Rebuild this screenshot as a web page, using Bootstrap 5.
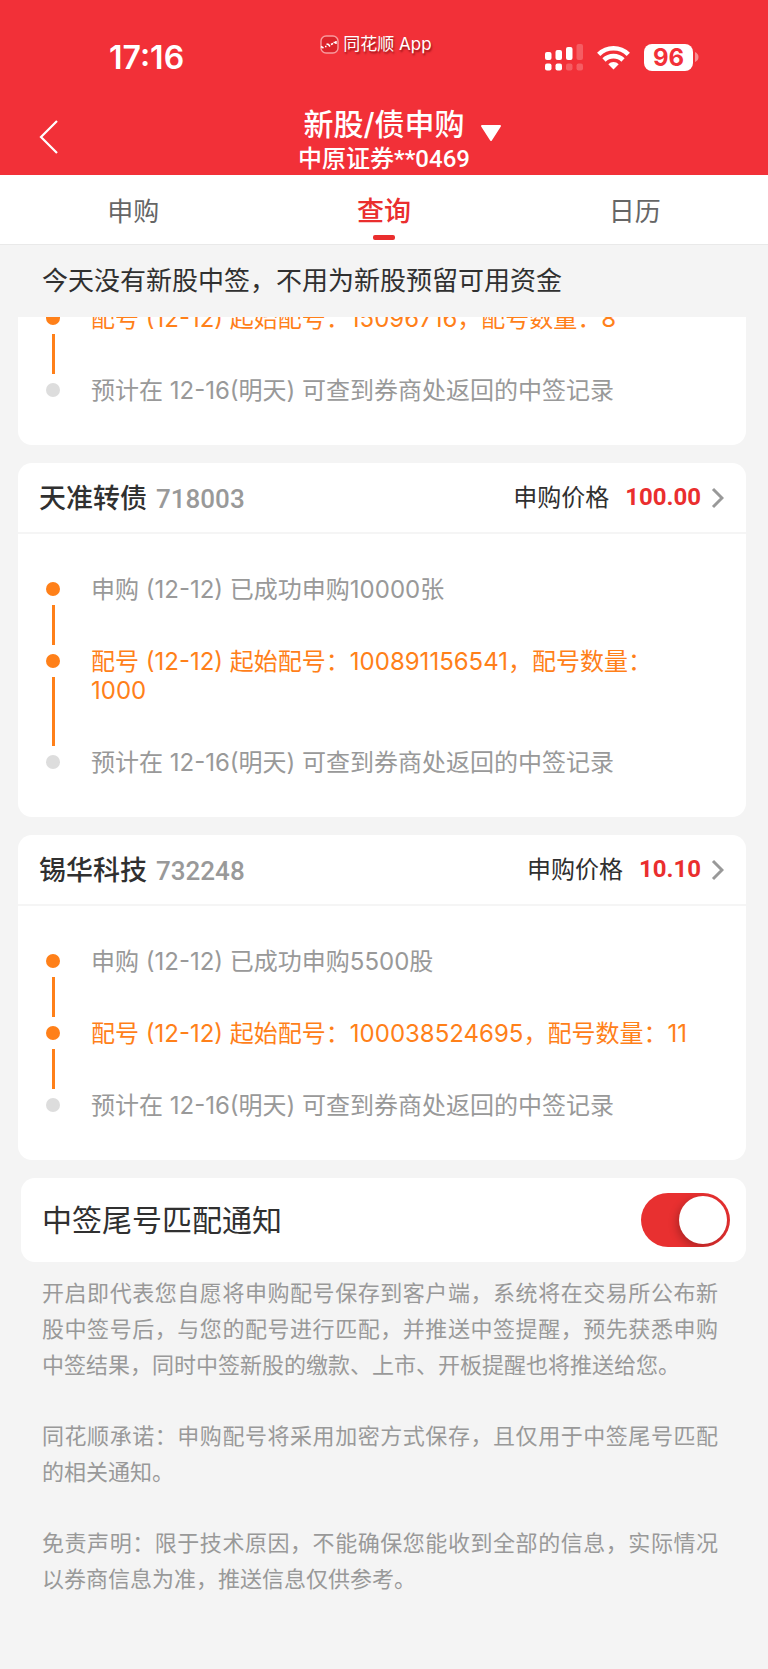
<!DOCTYPE html>
<html lang="zh-CN">
<head>
<meta charset="utf-8">
<meta name="viewport" content="width=device-width, initial-scale=1">
<title>新股/债申购</title>
<link rel="stylesheet" href="https://cdn.jsdelivr.net/npm/bootstrap@5.3.0/dist/css/bootstrap.min.css">
<style>
  body { background: #f4f4f4; color: #303030; font-family: Inter, "Noto Sans CJK SC", sans-serif; font-size: 24px; line-height: 29px; }
  .app-head { background: #f23038; color: #fff; height: 175px; }
  .three-col { display: grid; grid-template-columns: 1fr auto 1fr; }
  .status-bar { height: 98px; padding: 16px 16px 0 0; }
  .clock { font-size: 32px; font-weight: 600; padding-left: 109px; }
  .source-app { font-size: 17px; line-height: 20px; gap: 4px; padding-bottom: 26px; text-shadow: 1px 2px 2px rgba(90, 0, 0, .6); }
  .signals { gap: 14px; padding-right: 53px; }
  .battery-level { background: #fff; color: #f23038; width: 49px; height: 27px; border-radius: 8px; font-size: 24px; font-weight: 700; line-height: 27px; }
  .nav-row { height: 77px; }
  .page-title { font-size: 30px; line-height: 36px; font-weight: 500; margin: 0; }
  .account { font-family: Roboto, "Noto Sans CJK SC", sans-serif; line-height: 34px; font-weight: 500; }
  .plain-btn { background: none; border: 0; padding: 0; color: inherit; display: flex; }
  .back-btn { margin-left: 38px; }
  .drop-btn { margin: 19px 0 0 10px; }
  .tab-strip { background: #fff; height: 70px; padding: 0 8px; border-bottom: 1px solid #e9e9e9; }
  .tab-strip a { flex: 1; color: #666; font-size: 26px; line-height: 30px; text-decoration: none; padding-top: 22px; }
  .tab-strip a.active { color: #ea2e2e; font-size: 27px; font-weight: 500; }
  .tab-strip a.active::after { content: ""; width: 22px; height: 5px; margin-top: 8px; border-radius: 2px; background: #ea2e2e; }
  .notice { font-size: 26px; line-height: 30px; padding: 21px 42px; margin: 0; }
  .feed { padding: 0 22px 0 18px; gap: 18px; }
  .panel { background: #fff; border-radius: 14px; overflow: hidden; }
  .panel-cut { border-radius: 0 0 14px 14px; }
  .panel-cut .steps { padding-top: 0; margin-top: -13px; }
  .panel-head { height: 71px; padding: 0 22px 0 21px; border-bottom: 2px solid #f5f5f5; color: inherit; text-decoration: none; }
  .stock-name { font-size: 27px; font-weight: 500; margin: 0 9px 0 0; }
  .digits { font-family: Roboto, sans-serif; font-size: 26px; font-weight: 500; color: #999; }
  .price { font-size: 24px; font-weight: 700; color: #ea2e2e; margin: 0 10px 0 16px; }
  .steps { list-style: none; margin: 0; padding: 41px 46px 40px 28px; }
  .steps li { display: flex; gap: 31px; color: #999; }
  .steps li:not(:last-child) { padding-bottom: 43px; }
  .rail { flex: none; width: 14px; padding-top: 7px; display: flex; flex-direction: column; align-items: center; }
  .rail::before { content: ""; width: 14px; height: 14px; border-radius: 50%; background: #ff8019; }
  .steps li:last-child .rail::before { background: #ddd; }
  .steps li:not(:last-child) .rail::after { content: ""; flex: 1; width: 3px; background: #ff8019; margin: 9px 0 -41px; }
  .steps li.current { color: #ff8019; }
  .switch-panel { height: 84px; margin-left: 3px; padding: 0 16px 0 21px; }
  .switch-panel label { font-size: 30px; line-height: 36px; }
  .form-check-input.knob-switch { width: 89px; height: 54px; margin: 0; border: 0; border-radius: 27px; background: #e83030; padding: 3px; display: flex; justify-content: end; box-shadow: none; overflow: hidden; }
  .knob-switch::before { content: ""; width: 48px; height: 48px; border-radius: 50%; background: #fff; box-shadow: -2px 3px 8px rgba(0, 0, 0, .25); }
  .form-check-input.knob-switch:not(:checked) { background: #ccc; justify-content: start; }
  .fine-print { color: #999; font-size: 22px; line-height: 36px; padding: 13px 50px 48px 42px; text-align: justify; }
  .fine-print p { margin-bottom: 35px; }
</style>
</head>
<body>
<header class="app-head">
  <div class="status-bar three-col align-items-center">
    <div class="clock">17:16</div>
    <div class="source-app d-flex align-items-center">
      <svg width="19" height="19" viewBox="0 0 19 19"><rect x="1" y="1" width="17" height="17" rx="5" fill="#dc232b" stroke="#f99a9d" stroke-width="1.4"/><path d="M1 11.500l2.500 1.500M5 11.500h1.500M6.500 9l2 .5 1.500 2M11 9.500l2-1M13.500 7.500h3M16 6v3" fill="none" stroke="#fff" stroke-width="1.500"/></svg>
      <span>同花顺 App</span>
    </div>
    <div class="signals d-flex align-items-center justify-content-end">
      <svg width="38" height="27" viewBox="0 0 38 27" fill="#fff"><rect y="8" width="6.500" height="8" rx="2"/><rect x="10.500" y="6" width="6.500" height="10" rx="2"/><rect x="21" y="3" width="6.500" height="13" rx="2"/><rect x="31.500" width="6.500" height="16" rx="2" opacity=".22"/><rect y="19.500" width="6.500" height="7" rx="2"/><rect x="10.500" y="19.500" width="6.500" height="7" rx="2"/><rect x="21" y="19.500" width="6.500" height="7" rx="2" opacity=".22"/><rect x="31.500" y="19.500" width="6.500" height="7" rx="2" opacity=".22"/></svg>
      <svg width="33" height="25" viewBox="0 0 33 25"><g fill="none" stroke="#fff" stroke-width="4.600"><path d="M1.700 9.300a21 21 0 0 1 29.600 0"/><path d="M7 15a13.500 13.500 0 0 1 19 0"/></g><path d="M11.300 19.200a7.500 7.500 0 0 1 10.400 0L16.500 24.400z" fill="#fff"/></svg>
      <div class="d-flex align-items-center">
        <div class="battery-level text-center">96</div>
        <svg width="6" height="10" viewBox="0 0 6 10"><path d="M2 0c2.500 1 3.500 3 3.500 5S4.500 9 2 10z" fill="#fff" opacity=".45"/></svg>
      </div>
    </div>
  </div>
  <div class="nav-row three-col">
    <button class="plain-btn back-btn align-items-center" type="button" aria-label="返回"><svg width="22" height="36" viewBox="0 0 22 36"><path d="M19 2L3 18l16 16" fill="none" stroke="#fff" stroke-width="2.200"/></svg></button>
    <div class="text-center pt-2">
      <h1 class="page-title">新股/债申购</h1>
      <div class="account">中原证券**0469</div>
    </div>
    <button class="plain-btn drop-btn align-items-start" type="button" aria-label="切换账户"><svg width="22" height="30" viewBox="0 0 22 30"><path d="M2 9h18l-9 14z" fill="#fff" stroke="#fff" stroke-width="2" stroke-linejoin="round"/></svg></button>
  </div>
</header>

<nav class="tab-strip d-flex text-center">
  <a href="#apply">申购</a>
  <a href="#query" class="active d-flex flex-column align-items-center" aria-current="page">查询</a>
  <a href="#calendar">日历</a>
</nav>

<p class="notice">今天没有新股中签，不用为新股预留可用资金</p>

<main>
  <div class="feed d-flex flex-column">
    <section class="panel panel-cut">
      <ul class="steps">
        <li class="current"><span class="rail"></span><span>配号 (12-12) 起始配号：15096716，配号数量：8</span></li>
        <li><span class="rail"></span><span>预计在 12-16(明天) 可查到券商处返回的中签记录</span></li>
      </ul>
    </section>

    <section class="panel">
      <a class="panel-head d-flex align-items-center" href="#718003">
        <span class="d-flex align-items-center pt-1"><h2 class="stock-name">天准转债</h2><span class="digits">718003</span></span>
        <span class="ms-auto">申购价格</span><span class="digits price">100.00</span>
        <svg width="13" height="22" viewBox="0 0 13 22"><path d="M2 2l9 9-9 9" fill="none" stroke="#999" stroke-width="3"/></svg>
      </a>
      <ul class="steps">
        <li><span class="rail"></span><span>申购 (12-12) 已成功申购10000张</span></li>
        <li class="current"><span class="rail"></span><span>配号 (12-12) 起始配号：100891156541，配号数量：1000</span></li>
        <li><span class="rail"></span><span>预计在 12-16(明天) 可查到券商处返回的中签记录</span></li>
      </ul>
    </section>

    <section class="panel">
      <a class="panel-head d-flex align-items-center" href="#732248">
        <span class="d-flex align-items-center pt-1"><h2 class="stock-name">锡华科技</h2><span class="digits">732248</span></span>
        <span class="ms-auto">申购价格</span><span class="digits price">10.10</span>
        <svg width="13" height="22" viewBox="0 0 13 22"><path d="M2 2l9 9-9 9" fill="none" stroke="#999" stroke-width="3"/></svg>
      </a>
      <ul class="steps">
        <li><span class="rail"></span><span>申购 (12-12) 已成功申购5500股</span></li>
        <li class="current"><span class="rail"></span><span>配号 (12-12) 起始配号：100038524695，配号数量：11</span></li>
        <li><span class="rail"></span><span>预计在 12-16(明天) 可查到券商处返回的中签记录</span></li>
      </ul>
    </section>

    <section class="panel switch-panel d-flex align-items-center justify-content-between">
      <label for="notify">中签尾号匹配通知</label>
      <input class="form-check-input knob-switch" type="checkbox" role="switch" id="notify" checked>
    </section>
  </div>

  <div class="fine-print">
    <p>开启即代表您自愿将申购配号保存到客户端，系统将在交易所公布新股中签号后，与您的配号进行匹配，并推送中签提醒，预先获悉申购中签结果，同时中签新股的缴款、上市、开板提醒也将推送给您。</p>
    <p>同花顺承诺：申购配号将采用加密方式保存，且仅用于中签尾号匹配的相关通知。</p>
    <p class="mb-0">免责声明：限于技术原因，不能确保您能收到全部的信息，实际情况以券商信息为准，推送信息仅供参考。</p>
  </div>
</main>
<script src="https://cdn.jsdelivr.net/npm/bootstrap@5.3.0/dist/js/bootstrap.bundle.min.js"></script>
</body>
</html>
